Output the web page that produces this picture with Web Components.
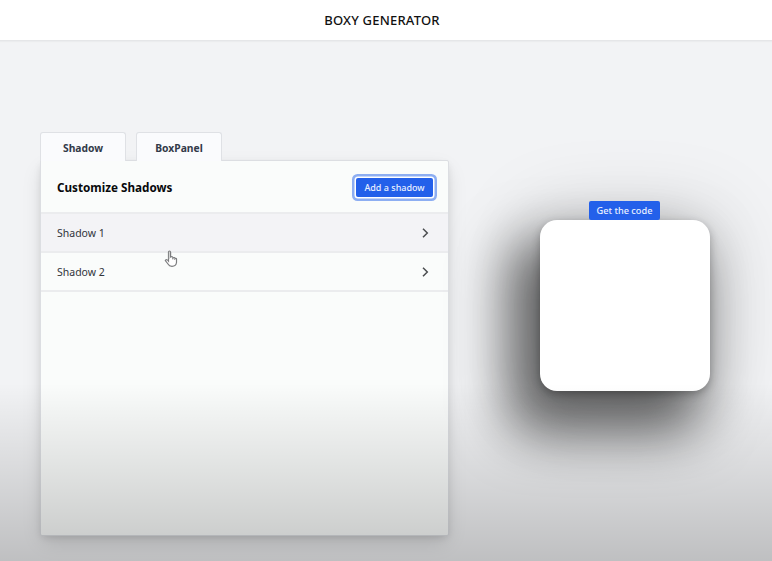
<!DOCTYPE html>
<html lang="en"><head><meta charset="utf-8"><title>Boxy Generator</title>
<style>body{margin:0;font-family:"Noto Sans","Open Sans",sans-serif}</style></head>
<body><boxy-app></boxy-app>
<script>
const define=(name,html)=>customElements.define(name,class extends HTMLElement{
  constructor(){super();this.attachShadow({mode:'open'}).innerHTML=html;}
});
define('boxy-header',`<style>:host{display:flex;box-sizing:border-box;height:41px;align-items:center;justify-content:center;background:#fff;border-bottom:1px solid #e5e6e8;box-shadow:0 1px 1px #ebecee;color:#111;font-size:13px;font-weight:500;padding-right:8px;letter-spacing:.2px;position:relative}</style><slot></slot>`);
define('boxy-button',`<style>:host{display:block}button{display:block;box-sizing:border-box;width:var(--w,71px);height:19px;border:0;border-radius:2px;background:#2360ea;color:#e9f0ff;font:500 9.2px/19px "Noto Sans",sans-serif;padding:0;white-space:nowrap}:host([focused]) button{box-shadow:0 0 0 1.5px #fff,0 0 0 4px #8daef2;margin:1px 3px 0;font-size:9px}</style><button><slot></slot></button>`);
define('boxy-tab',`<style>:host{display:block;box-sizing:border-box;width:86px;height:29px;background:#fafbfd;border:1px solid #dfe1e5;border-bottom:0;border-radius:3px 3px 0 0;color:#323a49;font-size:10.3px;font-weight:700;line-height:30px;text-align:center;margin-bottom:-1px;position:relative;z-index:1}</style><slot></slot>`);
define('shadow-row',`<style>:host{display:flex;box-sizing:border-box;height:39px;align-items:center;justify-content:space-between;padding:0 19px 0 16px;border-bottom:2px solid #ebecee;color:#30343a;font-size:10.5px;background:var(--row,transparent)}svg{display:block;width:8px;height:12px}</style><slot></slot><svg viewBox="0 0 8 12"><path d="M2 1.7 6.3 6 2 10.3" fill="none" stroke="#4b4d50" stroke-width="1.5"/></svg>`);
define('shadow-panel',`<style>:host{display:block;width:409px}nav{display:flex;gap:10px}section{box-sizing:border-box;height:376px;border:1px solid #dcdee2;border-radius:0 2px 2px 2px;background:#fafcfb;box-shadow:0 8px 20px -3px #0002,0 3px 8px -2px #0002}header{display:flex;box-sizing:border-box;height:53px;align-items:center;justify-content:space-between;padding:0 12px 0 16px;border-bottom:2px solid #ebecee}h1{margin:0;font-size:11.7px;line-height:16px;color:#08090b}</style>
<nav><boxy-tab>Shadow</boxy-tab><boxy-tab>BoxPanel</boxy-tab></nav><section><header><h1>Customize Shadows</h1><boxy-button focused style="--w:77px">Add a shadow</boxy-button></header><shadow-row style="--row:#f3f3f6">Shadow 1</shadow-row><shadow-row>Shadow 2</shadow-row></section>`);
define('box-preview',`<style>:host{display:flex;flex-direction:column;align-items:center;width:170px}boxy-button{position:relative;z-index:1;margin-right:1px}.box{width:170px;height:171px;border-radius:17px;background:#fff;box-shadow:0 3px 9px #0004,0 6px 80px 14px #0002,-21px 31px 54px 11px rgba(0,0,0,.57)}</style><boxy-button>Get the code</boxy-button><div class="box"></div>`);
define('hand-cursor',`<style>:host{position:absolute;left:164px;top:250px;width:14px;height:18px}svg{display:block}</style><svg width="14" height="18" viewBox="0 0 14 18"><path d="M4.5 11V2.2Q4.5 1 5.5 1T6.6 2.2V7Q8.8 6 9 8Q10.7 6.8 11 8.5Q12.8 7.8 12.5 10V12.5Q12 16.3 8 16.3Q5.2 16.3 4 14L1.3 10.5Q2.6 8.7 4.5 11Z" fill="#fff" stroke="#7b7c7e" stroke-width="1.2"/><path d="M4.8 2V9M8.8 8V9.5M10.8 8.7V10" stroke="#8b8c8e" fill="none"/></svg>`);
define('boxy-app',`<style>:host{display:block;position:relative;height:561px;overflow:hidden;background:#f2f3f5}main{display:flex;gap:91px;padding:91px 0 0 40px;align-items:flex-start}box-preview{margin-top:69px}.shade{position:absolute;left:0;right:0;bottom:0;height:178px;background:linear-gradient(#0000,#00000009 16%,#0000001c 52%,#00000036);pointer-events:none}</style><boxy-header>BOXY GENERATOR</boxy-header><main><shadow-panel></shadow-panel><box-preview></box-preview></main><div class="shade"></div><hand-cursor></hand-cursor>`);
</script></body></html>
